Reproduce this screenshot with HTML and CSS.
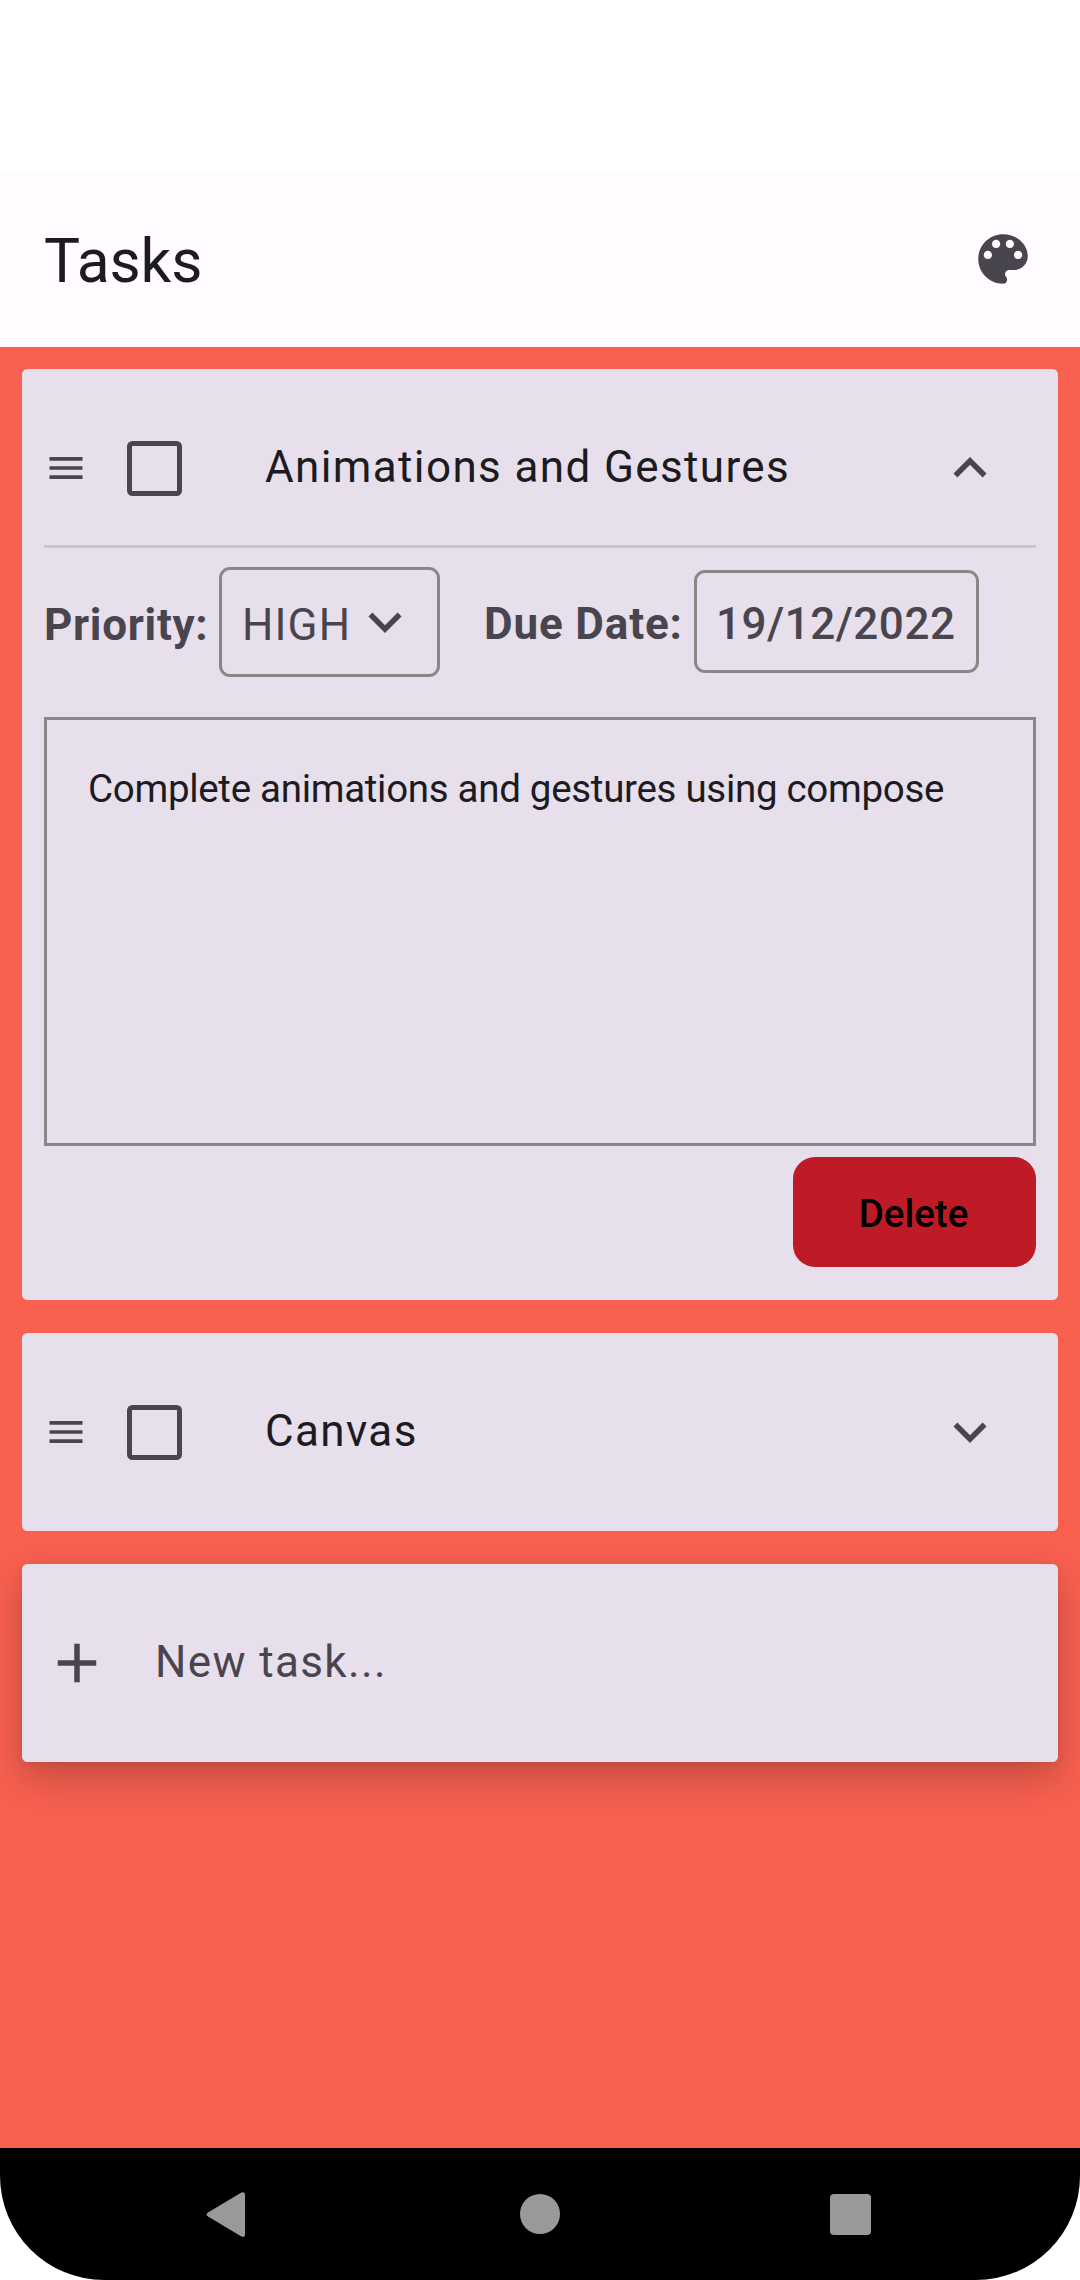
FILE: index.html
```html
<!DOCTYPE html>
<html lang="en">
<head>
<meta charset="utf-8">
<title>Tasks</title>
<link rel="stylesheet" href="styles.css">
</head>
<body>
<div class="screen">
  <header class="app-bar">
    <h1 class="app-title">Tasks</h1>
    <svg class="icon" viewBox="0 0 24 24"><path d="M12 3c-4.970 0-9 4.030-9 9s4.030 9 9 9c.83 0 1.500-.67 1.500-1.500 0-.39-.15-.74-.39-1.010-.23-.26-.38-.61-.38-.99 0-.83.67-1.500 1.500-1.500H16c2.760 0 5-2.240 5-5 0-4.420-4.030-8-9-8zm-5.500 9c-.83 0-1.500-.67-1.500-1.500S5.670 9 6.500 9 8 9.670 8 10.500 7.330 12 6.500 12zm3-4C8.670 8 8 7.330 8 6.500S8.670 5 9.500 5s1.500.67 1.500 1.500S10.330 8 9.500 8zm5 0c-.83 0-1.500-.67-1.500-1.500S13.670 5 14.500 5s1.500.67 1.500 1.500S15.330 8 14.500 8zm3 4c-.83 0-1.500-.67-1.500-1.500S16.670 9 17.500 9s1.500.67 1.500 1.500-.67 1.500-1.500 1.500z"/></svg>
  </header>
  <main class="task-list">
    <section class="card">
      <div class="task-row">
        <svg class="icon icon-drag" viewBox="0 0 24 24"><path d="M3 18h18v-2H3v2zm0-5h18v-2H3v2zm0-7v2h18V6H3z"/></svg>
        <span class="checkbox"></span>
        <span class="task-name">Animations and Gestures</span>
        <svg class="icon icon-toggle" viewBox="0 0 24 24"><path d="M12 8l-6 6 1.410 1.410L12 10.830l4.590 4.580L18 14z"/></svg>
      </div>
      <div class="details">
        <div class="fields">
          <span class="label">Priority:</span>
          <div class="field field-priority">
            <span class="value">HIGH</span>
            <svg class="icon" viewBox="0 0 24 24"><path d="M16.590 8.590L12 13.170 7.410 8.590 6 10l6 6 6-6z"/></svg>
          </div>
          <span class="label label-date">Due Date:</span>
          <div class="field field-date">19/12/2022</div>
        </div>
        <div class="description">Complete animations and gestures using compose</div>
        <div class="actions"><button class="delete">Delete</button></div>
      </div>
    </section>
    <section class="card">
      <div class="task-row">
        <svg class="icon icon-drag" viewBox="0 0 24 24"><path d="M3 18h18v-2H3v2zm0-5h18v-2H3v2zm0-7v2h18V6H3z"/></svg>
        <span class="checkbox"></span>
        <span class="task-name">Canvas</span>
        <svg class="icon icon-toggle" viewBox="0 0 24 24"><path d="M16.590 8.590L12 13.170 7.410 8.590 6 10l6 6 6-6z"/></svg>
      </div>
    </section>
    <section class="card card-new">
      <div class="task-row">
        <svg class="icon" viewBox="0 0 24 24"><path d="M19 13h-6v6h-2v-6H5v-2h6V5h2v6h6v2z"/></svg>
        <span class="placeholder">New task...</span>
      </div>
    </section>
  </main>
  <nav class="nav-bar">
    <svg class="nav-icon" viewBox="0 0 48 48"><path d="M3 22.500L36 2.700Q40 1 40 5V44Q40 48 36 46.300L3 26.500Q0 24.500 3 22.500z"/></svg>
    <svg class="nav-icon" viewBox="0 0 48 48"><circle cx="24" cy="24" r="20"/></svg>
    <svg class="nav-icon" viewBox="0 0 48 48"><rect x="3" y="4" width="41" height="41" rx="4"/></svg>
  </nav>
</div>
</body>
</html>
```
FILE: styles.css
```css
* { box-sizing: border-box; }

body {
  margin: 0;
  background: #fff;
  font-family: Roboto, sans-serif;
  color: #1c1b1f;
}

.screen {
  display: flex;
  flex-direction: column;
  height: 2280px;
  padding-top: 171px;
}

.app-bar {
  display: flex;
  align-items: center;
  justify-content: space-between;
  height: 176px;
  padding: 0 44px;
  background: #fffbfe;
}

.app-title {
  margin: 5px 0 0;
  font-size: 60.5px;
  font-weight: 400;
  line-height: 77px;
  letter-spacing: -.1px;
}

.icon {
  flex: none;
  width: 66px;
  height: 66px;
  fill: #49454f;
}

.task-list {
  flex: 1;
  display: flex;
  flex-direction: column;
  gap: 33px;
  padding: 22px;
  background: #f86050;
}

.card {
  padding: 22px;
  border-radius: 5.5px;
  background: #e7dfeb;
  color: #49454f;
  font-size: 44px;
  line-height: 66px;
  letter-spacing: 1.375px;
}

.card-new { box-shadow: 0 16px 38px rgba(0, 0, 0, .22), 0 2px 10px rgba(0, 0, 0, .06); }

.task-row {
  display: flex;
  align-items: center;
  height: 154px;
}

.icon-drag { width: 44px; height: 44px; }

.checkbox {
  width: 55px;
  height: 55px;
  margin-left: 39px;
  border: 5px solid #49454f;
  border-radius: 5.5px;
}

.task-name {
  flex: 1;
  margin-left: 83px;
  padding-bottom: 2px;
  color: #1c1b1f;
}

.icon-toggle { margin-right: 33px; }

.placeholder { margin-left: 45px; padding-bottom: 2px; }

.details {
  border-top: 3px solid #cac4d0;
  padding: 19px 0 11px;
}

.fields {
  display: flex;
  align-items: center;
  height: 110px;
}

.label {
  width: 175px;
  padding-top: 5px;
  font-weight: 700;
  letter-spacing: .7px;
}

.label-date {
  width: 210px;
  margin-left: 44px;
  padding-top: 3px;
  letter-spacing: .85px;
}

.field {
  display: flex;
  align-items: center;
  border: 3px solid #888;
  border-radius: 11px;
}

.field-priority {
  width: 221px;
  height: 110px;
  padding-left: 20px;
}

.field-priority .icon { margin-left: 1px; }

.value { padding-top: 5px; letter-spacing: 1.1px; }

.field-date {
  width: 285px;
  height: 103px;
  margin-bottom: 1px;
  padding: 4px 0 0 19px;
  font-weight: 500;
  letter-spacing: .5px;
}

.description {
  height: 429px;
  margin-top: 40px;
  padding: 41px;
  border: 3px solid #888;
  color: #1c1b1f;
  font-size: 38.5px;
  line-height: 55px;
  letter-spacing: -.3px;
}

.actions {
  display: flex;
  justify-content: flex-end;
  padding-top: 11px;
}

.delete {
  width: 243px;
  height: 110px;
  padding: 2px 2px 0 0;
  border: 0;
  border-radius: 22px;
  background: #be1b26;
  color: #000;
  font: 500 38.5px/55px Roboto, sans-serif;
  letter-spacing: 0;
}

.nav-bar {
  display: flex;
  align-items: center;
  justify-content: center;
  gap: 263px;
  height: 132px;
  border-radius: 0 0 104px 104px;
  background: #000;
}

.nav-icon {
  width: 48px;
  height: 48px;
  fill: #999;
}
```
